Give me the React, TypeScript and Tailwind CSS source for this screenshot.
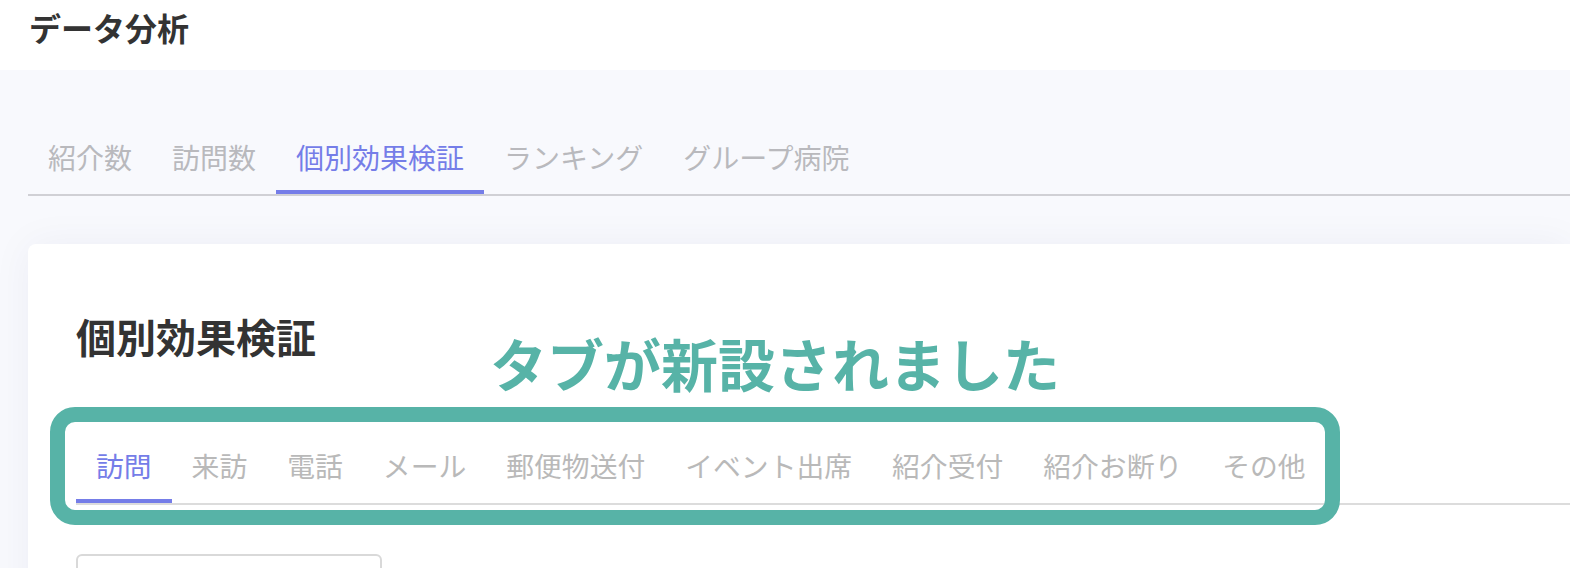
import React from 'react';

const topTabs = ['紹介数', '訪問数', '個別効果検証', 'ランキング', 'グループ病院'];
const subTabs = ['訪問', '来訪', '電話', 'メール', '郵便物送付', 'イベント出席', '紹介受付', '紹介お断り', 'その他'];

const font = { fontFamily: '"Noto Sans CJK JP", "Noto Sans", sans-serif' };

const App = () => {
  return (
    <div
      className="w-[1570px] h-[568px] overflow-hidden bg-[#f8f9fd] text-[#333333]"
      style={font}
    >
      {/* page header */}
      <header className="h-[70px] bg-white pl-[29px] pt-[6px]">
        <h1 className="text-[32px] leading-[42px] font-bold">データ分析</h1>
      </header>

      <main className="pl-[28px]">
        {/* main tabs */}
        <nav className="mt-[67px] flex border-b-2 border-[#d0d0d5]">
          {topTabs.map((t) => {
            const active = t === '個別効果検証';
            return (
              <div
                key={t}
                className={`px-5 pb-[13px] text-[28px] leading-[40px] border-b-4 ${
                  active ? 'border-[#757de8] text-[#757de8]' : 'border-transparent text-[#b9b9bd]'
                }`}
              >
                {t}
              </div>
            );
          })}
        </nav>

        {/* card */}
        <section className="relative mt-[48px] h-[400px] bg-white rounded-tl-lg pl-[48px] pt-[68px] shadow-[0_0_40px_rgba(30,40,90,0.05)]">
          <h2 className="text-[40px] leading-[48px] font-bold">個別効果検証</h2>

          <nav className="mt-[85px] flex border-b-2 border-[#dcdcdc]">
            {subTabs.map((t, i) => (
              <div
                key={t}
                className={`px-5 pb-[14px] text-[27.8px] leading-[40px] border-b-4 ${
                  i === 0 ? 'border-[#757de8] text-[#757de8]' : 'border-transparent text-[#b9b9b9]'
                }`}
              >
                {t}
              </div>
            ))}
          </nav>

          <div className="mt-[49px] w-[306px] h-[60px] rounded-md border-2 border-[#d9d9d9] bg-white" />

          {/* annotation overlay */}
          <div className="absolute left-[22px] top-[163px] w-[1290px] h-[118px] rounded-[25px] border-[15px] border-[#57b3a7]" />
          <div className="absolute left-[462px] top-[90px] text-[57px] leading-none font-bold text-[#57b3a7]">
            タブが新設されました
          </div>
        </section>
      </main>
    </div>
  );
};

export default App;
